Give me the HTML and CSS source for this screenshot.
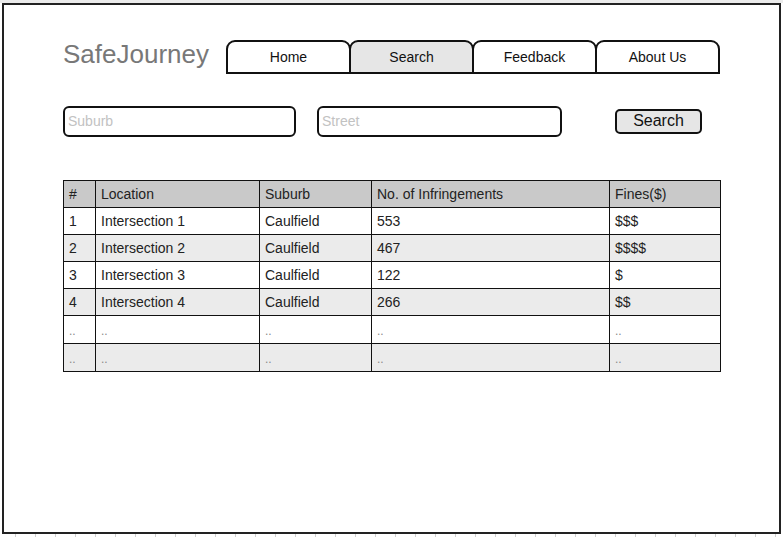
FILE: index.html
```html
<!DOCTYPE html>
<html>
<head>
<meta charset="utf-8">
<link rel="stylesheet" href="styles.css">
</head>
<body>
<div class="ruler-top"></div>
<div class="frame">
  <div class="header">
    <div class="title">SafeJourney</div>
    <nav class="tabs">
      <div class="tab">Home</div>
      <div class="tab active">Search</div>
      <div class="tab">Feedback</div>
      <div class="tab last">About Us</div>
    </nav>
  </div>
  <div class="search-row">
    <input class="field suburb" type="text" placeholder="Suburb">
    <input class="field street" type="text" placeholder="Street">
    <button class="btn">Search</button>
  </div>
  <table class="results">
    <colgroup>
      <col class="c-num"><col class="c-loc"><col class="c-sub"><col class="c-inf"><col class="c-fine">
    </colgroup>
    <thead>
      <tr><th>#</th><th>Location</th><th>Suburb</th><th>No. of Infringements</th><th>Fines($)</th></tr>
    </thead>
    <tbody>
      <tr><td>1</td><td>Intersection 1</td><td>Caulfield</td><td>553</td><td>$$$</td></tr>
      <tr class="alt"><td>2</td><td>Intersection 2</td><td>Caulfield</td><td>467</td><td>$$$$</td></tr>
      <tr><td>3</td><td>Intersection 3</td><td>Caulfield</td><td>122</td><td>$</td></tr>
      <tr class="alt"><td>4</td><td>Intersection 4</td><td>Caulfield</td><td>266</td><td>$$</td></tr>
      <tr class="dots tall"><td>..</td><td>..</td><td>..</td><td>..</td><td>..</td></tr>
      <tr class="alt dots tall"><td>..</td><td>..</td><td>..</td><td>..</td><td>..</td></tr>
    </tbody>
  </table>
</div>
<div class="ruler-bottom"></div>
</body>
</html>
```

FILE: styles.css
```css
html, body {
  margin: 0;
  padding: 0;
  background: #fff;
}
body {
  width: 783px;
  height: 537px;
  overflow: hidden;
  font-family: "Liberation Sans", Arial, sans-serif;
  color: #1a1a1a;
}
.ruler-top {
  height: 3px;
  background: #ebebeb;
}
.frame {
  margin-left: 2px;
  width: 779px;
  height: 531px;
  box-sizing: border-box;
  border: 2px solid #222;
}
.ruler-bottom {
  height: 3px;
  background: repeating-linear-gradient(to right, transparent 0, transparent 15px, #cfcfcf 15px, #cfcfcf 16px, transparent 16px, transparent 20px);
}
.header {
  display: flex;
  align-items: flex-start;
  padding: 35px 0 0 59px;
}
.title {
  flex: 0 0 163px;
  height: 30px;
  line-height: 30px;
  margin-top: -1px;
  font-size: 26px;
  color: #787878;
}
.tabs {
  display: flex;
}
.tab {
  flex: 0 0 125px;
  height: 34px;
  box-sizing: border-box;
  border: 2px solid #111;
  border-radius: 9px 9px 0 0;
  margin-left: -2px;
  display: flex;
  align-items: center;
  justify-content: center;
  font-size: 14px;
  color: #111;
  background: #fff;
}
.tab:first-child {
  margin-left: 0;
}
.tab.active {
  background: #e6e6e6;
}
.search-row {
  display: flex;
  align-items: center;
  margin-top: 32px;
  padding-left: 59px;
  height: 31px;
}
.field {
  height: 31px;
  box-sizing: border-box;
  border: 2px solid #111;
  border-radius: 6px;
  padding: 0 3px 1px;
  margin: 0;
  font-family: "Liberation Sans", Arial, sans-serif;
  font-size: 14px;
  color: #222;
  background: #fff;
  outline: none;
}
.field::placeholder {
  color: #c2c2c2;
}
.suburb {
  width: 233px;
}
.street {
  width: 245px;
  margin-left: 21px;
}
.btn {
  margin: 0 0 0 53px;
  width: 87px;
  height: 25px;
  box-sizing: border-box;
  border: 2px solid #111;
  border-radius: 5px;
  background: #e6e6e6;
  padding: 0 0 2px;
  font-family: "Liberation Sans", Arial, sans-serif;
  font-size: 16px;
  color: #111;
}
.results {
  margin: 43px 0 0 59px;
  width: 657px;
  table-layout: fixed;
  border-collapse: collapse;
  font-size: 14px;
}
.c-num { width: 32px; }
.c-loc { width: 164px; }
.c-sub { width: 112px; }
.c-inf { width: 238px; }
.c-fine { width: 111px; }
.results th,
.results td {
  border: 1px solid #111;
  height: 27px;
  padding: 0 5px;
  box-sizing: border-box;
  text-align: left;
  font-weight: normal;
  color: #222;
  white-space: nowrap;
}
.results thead th {
  background: #c9c9c9;
}
.results tr.alt td {
  background: #ebebeb;
}
.results tr.tall td {
  height: 28px;
}
.results tr.dots td {
  color: #8a8a8a;
  font-size: 12px;
  padding-top: 3px;
}
```
